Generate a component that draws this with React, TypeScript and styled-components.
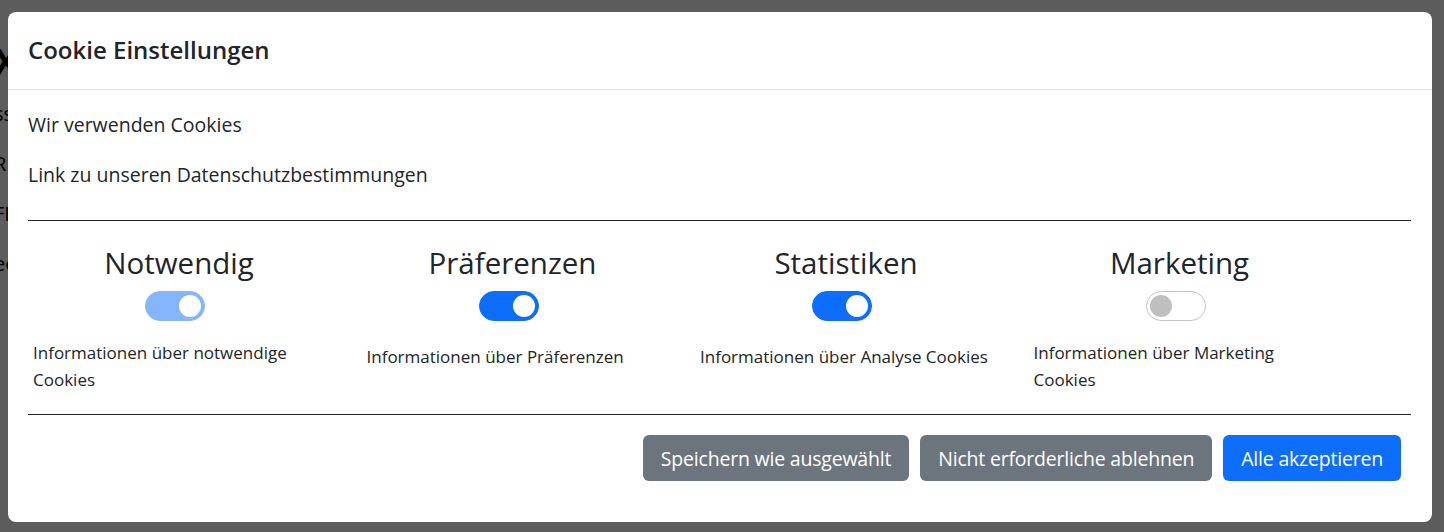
import { useState } from "react";
import styled, { createGlobalStyle } from "styled-components";

const GlobalStyle = createGlobalStyle`
  html, body {
    margin: 0;
    padding: 0;
    background: #ffffff;
    font-family: "Open Sans", "Noto Sans", sans-serif;
    color: #212529;
  }
  * {
    box-sizing: border-box;
  }
`;

// page behind the modal, mostly hidden
const Page = styled.div`
  padding: 42px 0 0 0;
  margin-left: -6px;
  height: 532px;
  overflow: hidden;
`;

const PageTitle = styled.h1`
  margin: 0;
  font-size: 36px;
  line-height: 40px;
  font-weight: 700;
  color: #000;
`;

const PageLine = styled.p`
  margin: 0;
  padding-top: 26px;
  font-size: 20px;
  line-height: 24px;
  color: #000;

  &:first-of-type {
    padding-top: 20px;
  }
`;

const Backdrop = styled.div`
  position: fixed;
  inset: 0;
  background: rgba(0, 0, 0, 0.64);
`;

const Dialog = styled.div`
  position: fixed;
  top: 12px;
  left: 8px;
  width: 1424px;
  height: 510px;
  background: #fff;
  border-radius: 8px;
  display: flex;
  flex-direction: column;
`;

const Header = styled.div`
  height: 78px;
  padding: 0 20px;
  display: flex;
  align-items: center;
  border-bottom: 1px solid #dee2e6;
`;

const Title = styled.h5`
  margin: 0;
  font-size: 24px;
  font-weight: 600;
  line-height: 1.2;
`;

const Body = styled.div`
  padding: 23px 21px 0 20px;
`;

const Text = styled.p`
  margin: 0 0 26px;
  font-size: 19.5px;
  line-height: 24px;
`;

const Rule = styled.hr<{ $top: number }>`
  margin: ${(p) => p.$top}px 0 0;
  border: 0;
  border-top: 1px solid #212529;
`;

const Options = styled.div`
  display: grid;
  grid-template-columns: repeat(4, 333.5px);
  padding: 25px 0 0 5px;
`;

const Option = styled.div`
  width: 292px;
  display: flex;
  flex-direction: column;
  align-items: center;
`;

const OptionTitle = styled.h3`
  margin: 0;
  font-size: 29.5px;
  font-weight: 400;
  line-height: 34px;
`;

const Switch = styled.button<{ $on: boolean; $locked?: boolean }>`
  position: relative;
  margin: 11px 8px 0 0;
  width: 60px;
  height: 30px;
  padding: 0;
  border-radius: 15px;
  border: 1px solid ${(p) => (p.$on ? "#0d6efd" : "#c4c4c4")};
  background: ${(p) => (p.$on ? "#0d6efd" : "#fff")};
  opacity: ${(p) => (p.$locked ? 0.5 : 1)};
  cursor: ${(p) => (p.$locked ? "default" : "pointer")};

  &::after {
    content: "";
    position: absolute;
    top: 3px;
    left: ${(p) => (p.$on ? "33px" : "3px")};
    width: 22px;
    height: 22px;
    border-radius: 50%;
    background: ${(p) => (p.$on ? "#fff" : "#bfbfbf")};
  }
`;

const Info = styled.p<{ $single?: boolean }>`
  align-self: stretch;
  margin: ${(p) => (p.$single ? "22px" : "18px")} 0 0;
  font-size: 17px;
  line-height: 27px;
`;

const Footer = styled.div`
  display: flex;
  justify-content: flex-end;
  gap: 11px;
  padding: 20px 10px 0 0;
`;

const Button = styled.button<{ $primary?: boolean }>`
  height: 46px;
  padding: 0 18px;
  border: 0;
  border-radius: 6px;
  font-family: inherit;
  font-size: 19.5px;
  letter-spacing: -0.2px;
  color: #fff;
  background: ${(p) => (p.$primary ? "#0d6efd" : "#6c757d")};
  cursor: pointer;
`;

const options = [
  { key: "necessary", title: "Notwendig", info: "Informationen über notwendige Cookies", locked: true },
  { key: "prefs", title: "Präferenzen", info: "Informationen über Präferenzen", single: true },
  { key: "stats", title: "Statistiken", info: "Informationen über Analyse Cookies", single: true },
  { key: "marketing", title: "Marketing", info: "Informationen über Marketing Cookies" },
];

export default function App() {
  const [state, setState] = useState<Record<string, boolean>>({
    necessary: true,
    prefs: true,
    stats: true,
    marketing: false,
  });

  return (
    <>
      <GlobalStyle />
      <Page>
        <PageTitle>XX</PageTitle>
        <PageLine>sss</PageLine>
        <PageLine>RRR</PageLine>
        <PageLine>FFF</PageLine>
        <PageLine>eee</PageLine>
      </Page>
      <Backdrop />
      <Dialog>
        <Header>
          <Title>Cookie Einstellungen</Title>
        </Header>
        <Body>
          <Text>Wir verwenden Cookies</Text>
          <Text>Link zu unseren Datenschutzbestimmungen</Text>
          <Rule $top={33} />
          <Options>
            {options.map((o) => (
              <Option key={o.key}>
                <OptionTitle>{o.title}</OptionTitle>
                <Switch
                  $on={state[o.key]}
                  $locked={o.locked}
                  onClick={() => !o.locked && setState({ ...state, [o.key]: !state[o.key] })}
                />
                <Info $single={o.single}>{o.info}</Info>
              </Option>
            ))}
          </Options>
          <Rule $top={21} />
          <Footer>
            <Button>Speichern wie ausgewählt</Button>
            <Button>Nicht erforderliche ablehnen</Button>
            <Button $primary>Alle akzeptieren</Button>
          </Footer>
        </Body>
      </Dialog>
    </>
  );
}
